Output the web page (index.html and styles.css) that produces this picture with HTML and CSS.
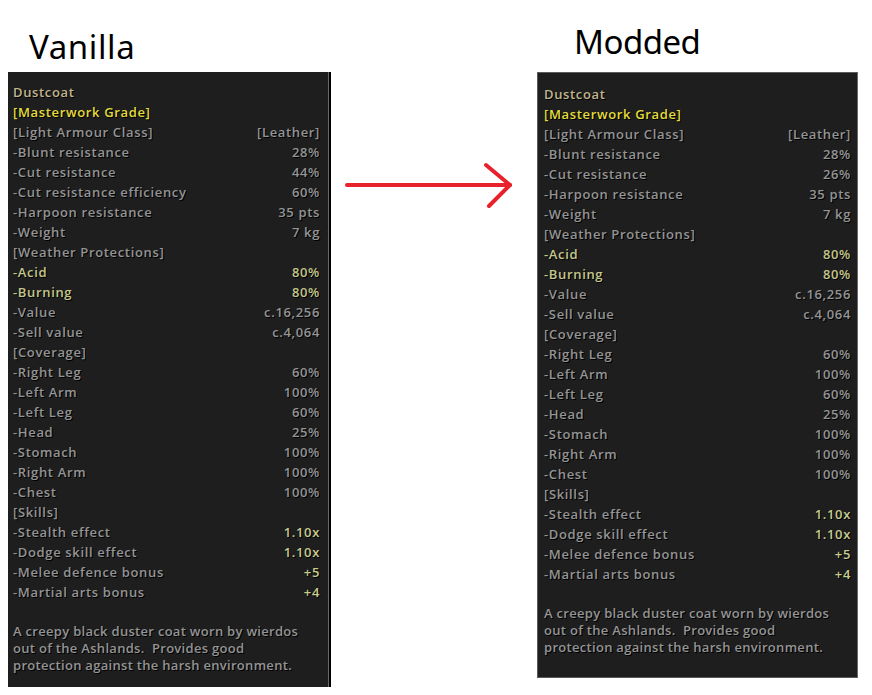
FILE: index.html
```html
<!DOCTYPE html>
<html>
<head>
<meta charset="utf-8">
<link rel="stylesheet" href="styles.css">
</head>
<body>
<div class="page">
  <section class="col col-left">
    <h1 class="title title-left">Vanilla</h1>
    <div class="panel panel-left">
      <div class="row name">Dustcoat</div>
      <div class="row grade">[Masterwork Grade]</div>
      <div class="row"><span>[Light Armour Class]</span><span>[Leather]</span></div>
      <div class="row"><span>-Blunt resistance</span><span>28%</span></div>
      <div class="row"><span>-Cut resistance</span><span>44%</span></div>
      <div class="row"><span>-Cut resistance efficiency</span><span>60%</span></div>
      <div class="row"><span>-Harpoon resistance</span><span>35 pts</span></div>
      <div class="row"><span>-Weight</span><span>7 kg</span></div>
      <div class="row"><span>[Weather Protections]</span></div>
      <div class="row hi"><span>-Acid</span><span>80%</span></div>
      <div class="row hi"><span>-Burning</span><span>80%</span></div>
      <div class="row"><span>-Value</span><span>c.16,256</span></div>
      <div class="row"><span>-Sell value</span><span>c.4,064</span></div>
      <div class="row"><span>[Coverage]</span></div>
      <div class="row"><span>-Right Leg</span><span>60%</span></div>
      <div class="row"><span>-Left Arm</span><span>100%</span></div>
      <div class="row"><span>-Left Leg</span><span>60%</span></div>
      <div class="row"><span>-Head</span><span>25%</span></div>
      <div class="row"><span>-Stomach</span><span>100%</span></div>
      <div class="row"><span>-Right Arm</span><span>100%</span></div>
      <div class="row"><span>-Chest</span><span>100%</span></div>
      <div class="row"><span>[Skills]</span></div>
      <div class="row"><span>-Stealth effect</span><span class="v">1.10x</span></div>
      <div class="row"><span>-Dodge skill effect</span><span class="v">1.10x</span></div>
      <div class="row"><span>-Melee defence bonus</span><span class="v">+5</span></div>
      <div class="row"><span>-Martial arts bonus</span><span class="v">+4</span></div>
      <p class="desc">A creepy black duster coat worn by wierdos out of the Ashlands.&nbsp; Provides good protection against the harsh environment.</p>
    </div>
  </section>

  <div class="arrow-col">
    <svg class="arrow" width="170" height="48" viewBox="0 0 170 48">
      <path d="M2 23 L165 23" stroke="#e8222c" stroke-width="4" stroke-linecap="round" fill="none"/>
      <path d="M141 3 L165 23 L144 44" stroke="#e8222c" stroke-width="4" stroke-linecap="round" stroke-linejoin="round" fill="none"/>
    </svg>
  </div>

  <section class="col col-right">
    <h1 class="title title-right">Modded</h1>
    <div class="panel panel-right">
      <div class="row name">Dustcoat</div>
      <div class="row grade">[Masterwork Grade]</div>
      <div class="row"><span>[Light Armour Class]</span><span>[Leather]</span></div>
      <div class="row"><span>-Blunt resistance</span><span>28%</span></div>
      <div class="row"><span>-Cut resistance</span><span>26%</span></div>
      <div class="row"><span>-Harpoon resistance</span><span>35 pts</span></div>
      <div class="row"><span>-Weight</span><span>7 kg</span></div>
      <div class="row"><span>[Weather Protections]</span></div>
      <div class="row hi"><span>-Acid</span><span>80%</span></div>
      <div class="row hi"><span>-Burning</span><span>80%</span></div>
      <div class="row"><span>-Value</span><span>c.16,256</span></div>
      <div class="row"><span>-Sell value</span><span>c.4,064</span></div>
      <div class="row"><span>[Coverage]</span></div>
      <div class="row"><span>-Right Leg</span><span>60%</span></div>
      <div class="row"><span>-Left Arm</span><span>100%</span></div>
      <div class="row"><span>-Left Leg</span><span>60%</span></div>
      <div class="row"><span>-Head</span><span>25%</span></div>
      <div class="row"><span>-Stomach</span><span>100%</span></div>
      <div class="row"><span>-Right Arm</span><span>100%</span></div>
      <div class="row"><span>-Chest</span><span>100%</span></div>
      <div class="row"><span>[Skills]</span></div>
      <div class="row"><span>-Stealth effect</span><span class="v">1.10x</span></div>
      <div class="row"><span>-Dodge skill effect</span><span class="v">1.10x</span></div>
      <div class="row"><span>-Melee defence bonus</span><span class="v">+5</span></div>
      <div class="row"><span>-Martial arts bonus</span><span class="v">+4</span></div>
      <p class="desc">A creepy black duster coat worn by wierdos out of the Ashlands.&nbsp; Provides good protection against the harsh environment.</p>
    </div>
  </section>
</div>
</body>
</html>
```

FILE: styles.css
```css
html, body {
  margin: 0;
  padding: 0;
  background: #ffffff;
}

.page {
  display: flex;
  align-items: flex-start;
  width: 872px;
  height: 695px;
}

.col {
  display: flex;
  flex-direction: column;
}

.col-left {
  margin-left: 8px;
  width: 321px;
}

.col-right {
  margin-left: 22px;
  width: 321px;
}

.title {
  margin: 0;
  font-family: "Noto Sans", "Open Sans", sans-serif;
  font-weight: 400;
  font-size: 33px;
  line-height: 40px;
  color: #000;
}

.title-left {
  margin-top: 27px;
  margin-left: 21px;
  height: 45px;
  letter-spacing: 0.6px;
}

.title-right {
  margin-top: 22px;
  margin-left: 37px;
  height: 50px;
  letter-spacing: -0.5px;
}

.arrow-col {
  margin-left: 16px;
  margin-top: 162px;
  width: 170px;
}

.arrow {
  display: block;
}

.panel {
  background: #1e1e1e;
  font-family: "Open Sans", "Noto Sans", sans-serif;
  font-weight: 600;
  font-size: 13px;
  letter-spacing: 0.65px;
  color: #949494;
  text-shadow: 1px 1px 0 #000;
  box-sizing: border-box;
}

.panel-left {
  height: 615px;
  padding: 10px 8px 0 5px;
  border-right: 1px solid #6a6a6a;
  box-shadow: 2px 0 0 #000;
}

.panel-right {
  height: 606px;
  padding: 11px 6px 0 6px;
  border: 1px solid #5a5a5a;
  border-right-color: #6a6a6a;
}

.row {
  display: flex;
  justify-content: space-between;
  height: 20px;
  line-height: 20px;
  white-space: nowrap;
}

.name {
  color: #c2b58e;
}

.grade {
  color: #e4dc3a;
}

.hi {
  color: #c5c78a;
}

.v {
  color: #c8cb8e;
}

.desc {
  margin: 21px 0 0 0;
  line-height: 17px;
  width: 300px;
  letter-spacing: 0.3px;
}
```
